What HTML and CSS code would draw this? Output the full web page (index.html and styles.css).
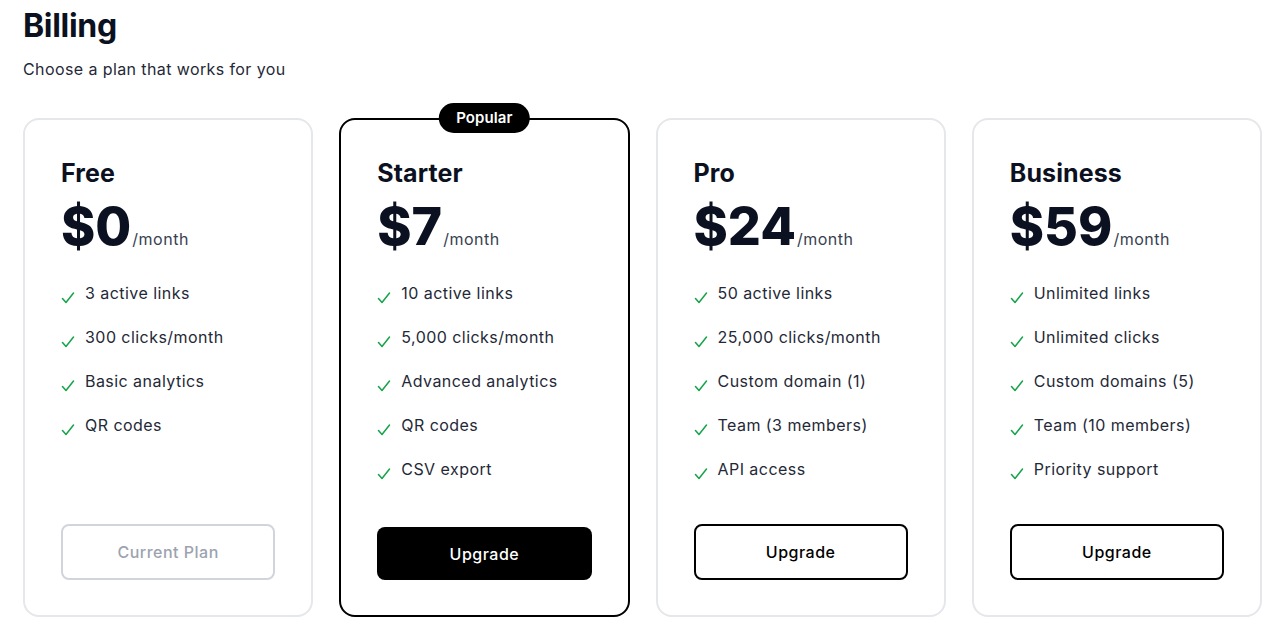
FILE: index.html
```html
<!DOCTYPE html>
<html lang="en">
<head>
<meta charset="utf-8">
<title>Billing</title>
<link rel="stylesheet" href="styles.css">
</head>
<body>
<main class="page">
  <h1 class="title">Billing</h1>
  <p class="subtitle">Choose a plan that works for you</p>
  <section class="plans">
    <article class="plan">
      <h2 class="plan-name">Free</h2>
      <div class="price"><span class="amount">$0</span><span class="period">/month</span></div>
      <ul class="features">
        <li><svg class="check" viewBox="0 0 14 12"><polyline points="1.5,6.5 5,10.5 12.5,1"/></svg>3 active links</li>
        <li><svg class="check" viewBox="0 0 14 12"><polyline points="1.5,6.5 5,10.5 12.5,1"/></svg>300 clicks/month</li>
        <li><svg class="check" viewBox="0 0 14 12"><polyline points="1.5,6.5 5,10.5 12.5,1"/></svg>Basic analytics</li>
        <li><svg class="check" viewBox="0 0 14 12"><polyline points="1.5,6.5 5,10.5 12.5,1"/></svg>QR codes</li>
      </ul>
      <button class="btn btn-current">Current Plan</button>
    </article>
    <article class="plan plan-popular">
      <span class="badge">Popular</span>
      <h2 class="plan-name">Starter</h2>
      <div class="price"><span class="amount">$7</span><span class="period">/month</span></div>
      <ul class="features">
        <li><svg class="check" viewBox="0 0 14 12"><polyline points="1.5,6.5 5,10.5 12.5,1"/></svg>10 active links</li>
        <li><svg class="check" viewBox="0 0 14 12"><polyline points="1.5,6.5 5,10.5 12.5,1"/></svg>5,000 clicks/month</li>
        <li><svg class="check" viewBox="0 0 14 12"><polyline points="1.5,6.5 5,10.5 12.5,1"/></svg>Advanced analytics</li>
        <li><svg class="check" viewBox="0 0 14 12"><polyline points="1.5,6.5 5,10.5 12.5,1"/></svg>QR codes</li>
        <li><svg class="check" viewBox="0 0 14 12"><polyline points="1.5,6.5 5,10.5 12.5,1"/></svg>CSV export</li>
      </ul>
      <button class="btn btn-primary">Upgrade</button>
    </article>
    <article class="plan">
      <h2 class="plan-name">Pro</h2>
      <div class="price"><span class="amount">$24</span><span class="period">/month</span></div>
      <ul class="features">
        <li><svg class="check" viewBox="0 0 14 12"><polyline points="1.5,6.5 5,10.5 12.5,1"/></svg>50 active links</li>
        <li><svg class="check" viewBox="0 0 14 12"><polyline points="1.5,6.5 5,10.5 12.5,1"/></svg>25,000 clicks/month</li>
        <li><svg class="check" viewBox="0 0 14 12"><polyline points="1.5,6.5 5,10.5 12.5,1"/></svg>Custom domain (1)</li>
        <li><svg class="check" viewBox="0 0 14 12"><polyline points="1.5,6.5 5,10.5 12.5,1"/></svg>Team (3 members)</li>
        <li><svg class="check" viewBox="0 0 14 12"><polyline points="1.5,6.5 5,10.5 12.5,1"/></svg>API access</li>
      </ul>
      <button class="btn btn-outline">Upgrade</button>
    </article>
    <article class="plan">
      <h2 class="plan-name">Business</h2>
      <div class="price"><span class="amount">$59</span><span class="period">/month</span></div>
      <ul class="features">
        <li><svg class="check" viewBox="0 0 14 12"><polyline points="1.5,6.5 5,10.5 12.5,1"/></svg>Unlimited links</li>
        <li><svg class="check" viewBox="0 0 14 12"><polyline points="1.5,6.5 5,10.5 12.5,1"/></svg>Unlimited clicks</li>
        <li><svg class="check" viewBox="0 0 14 12"><polyline points="1.5,6.5 5,10.5 12.5,1"/></svg>Custom domains (5)</li>
        <li><svg class="check" viewBox="0 0 14 12"><polyline points="1.5,6.5 5,10.5 12.5,1"/></svg>Team (10 members)</li>
        <li><svg class="check" viewBox="0 0 14 12"><polyline points="1.5,6.5 5,10.5 12.5,1"/></svg>Priority support</li>
      </ul>
      <button class="btn btn-outline">Upgrade</button>
    </article>
  </section>
</main>
</body>
</html>
```
FILE: styles.css
```css
* { box-sizing: border-box; }
html, body { margin: 0; padding: 0; background: #ffffff; }
body {
  font-family: Inter, "Noto Sans", "Liberation Sans", sans-serif;
  color: #111827;
}
.page {
  padding: 7px 18px 0 23px;
}
.title {
  margin: 0;
  font-size: 32px;
  line-height: 38px;
  font-weight: 700;
  color: #0b1120;
  letter-spacing: -0.3px;
}
.subtitle {
  margin: 12px 0 0;
  font-size: 16px;
  line-height: 24px;
  color: #1f2937;
  letter-spacing: 0.4px;
}
.plans {
  margin-top: 37px;
  display: grid;
  grid-template-columns: repeat(4, 1fr);
  gap: 26px;
}
.plan {
  position: relative;
  display: flex;
  flex-direction: column;
  border: 2px solid #e5e7eb;
  border-radius: 16px;
  padding: 37px 36px 35px;
  background: #fff;
}
.plan-popular {
  border-color: #000;
}
.badge {
  position: absolute;
  top: -17px;
  left: 50%;
  transform: translateX(-50%);
  background: #000;
  color: #fff;
  font-size: 15px;
  font-weight: 600;
  line-height: 20px;
  padding: 5px 17px;
  border-radius: 999px;
  white-space: nowrap;
  letter-spacing: 0.1px;
}
.plan-name {
  margin: 0;
  font-size: 25px;
  line-height: 32px;
  font-weight: 700;
  color: #0b1120;
  letter-spacing: 0.1px;
}
.price {
  margin-top: 12px;
  display: flex;
  align-items: baseline;
}
.amount {
  font-size: 52px;
  line-height: 52px;
  font-weight: 800;
  color: #0b1120;
}
.period {
  font-size: 16px;
  line-height: 20px;
  color: #374151;
  margin-left: 1px;
  letter-spacing: 0.5px;
}
.features {
  list-style: none;
  margin: 28px 0 43px;
  padding: 0;
  display: flex;
  flex-direction: column;
  gap: 20px;
}
.features li {
  display: flex;
  align-items: flex-start;
  font-size: 16px;
  line-height: 24px;
  color: #1f2937;
  letter-spacing: 0.45px;
}
.check {
  width: 14px;
  height: 12px;
  margin: 11px 10px 0 0;
  flex: none;
  fill: none;
  stroke: #16a34a;
  stroke-width: 1.5;
  stroke-linecap: round;
  stroke-linejoin: round;
}
.btn {
  margin-top: auto;
  width: 100%;
  font-family: inherit;
  font-size: 16px;
  font-weight: 500;
  line-height: 24px;
  letter-spacing: 0.5px;
  border-radius: 8px;
  background: #fff;
  cursor: pointer;
}
.btn-current {
  height: 56px;
  border: 2px solid #d1d5db;
  color: #9ca3af;
}
.btn-outline {
  height: 56px;
  border: 2px solid #000;
  color: #000;
}
.btn-primary {
  height: 53px;
  border: 0;
  background: #000;
  color: #fff;
}
```
